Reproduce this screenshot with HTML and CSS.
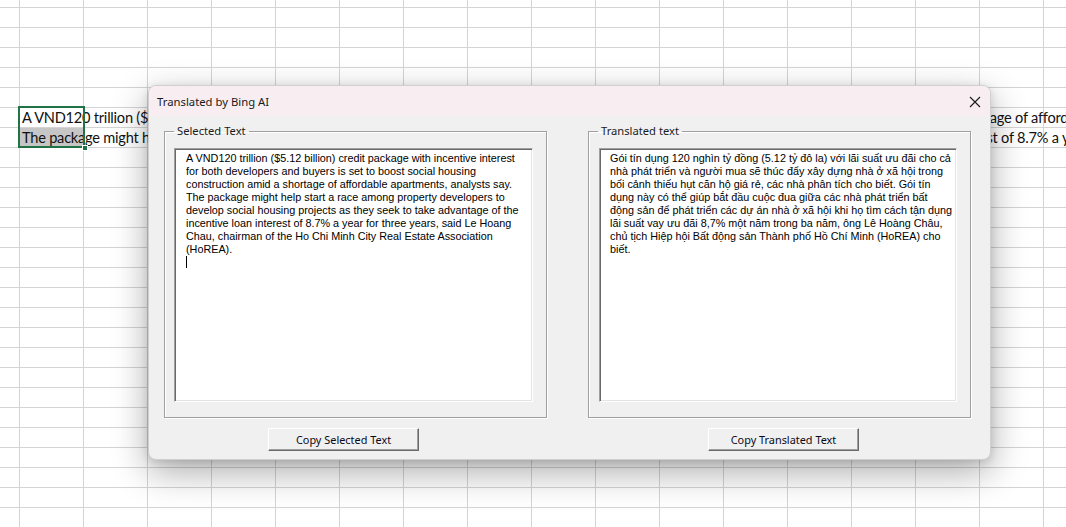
FILE: index.html
```html
<!DOCTYPE html>
<html lang="en">
<head>
<meta charset="utf-8">
<title>Translated by Bing AI</title>
<link rel="stylesheet" href="styles.css">
</head>
<body>
<div class="sheet">
  <div class="cells">
    <div class="row">A VND120 trillion ($5.12 billion) credit package with incentive interest for both developers and buyers is set to boost social housing construction amid a shortage of affordable apartments, analysts say.</div>
    <div class="row row-range">The package might help start a race among property developers to develop social housing projects as they seek to take advantage of the incentive loan interest of 8.7% a year for three years, said Le Hoang Chau, chairman of the Ho Chi Minh City Real Estate Association (HoREA).</div>
    <div class="active-cell"><span class="fill-handle"></span></div>
  </div>
</div>

<div class="dialog">
  <div class="titlebar">
    <span class="title">Translated by Bing AI</span>
    <svg class="close" width="12" height="12" viewBox="0 0 12 12" aria-hidden="true"><path d="M1 1 L11 11 M11 1 L1 11" stroke="#1a1a1a" stroke-width="1.1" fill="none"/></svg>
  </div>
  <div class="dialog-body">
    <div class="col">
      <fieldset class="group">
        <legend>Selected Text</legend>
        <div class="textbox">A VND120 trillion ($5.12 billion) credit package with incentive interest<br>for both developers and buyers is set to boost social housing<br>construction amid a shortage of affordable apartments, analysts say.<br>The package might help start a race among property developers to<br>develop social housing projects as they seek to take advantage of the<br>incentive loan interest of 8.7% a year for three years, said Le Hoang<br>Chau, chairman of the Ho Chi Minh City Real Estate Association<br>(HoREA).<br><span class="caret"></span></div>
      </fieldset>
      <button class="btn btn-left">Copy Selected Text</button>
    </div>
    <div class="col">
      <fieldset class="group">
        <legend>Translated text</legend>
        <div class="textbox textbox-right">Gói tín dụng 120 nghìn tỷ đồng (5.12 tỷ đô la) với lãi suất ưu đãi cho cả<br>nhà phát triển và người mua sẽ thúc đẩy xây dựng nhà ở xã hội trong<br>bối cảnh thiếu hụt căn hộ giá rẻ, các nhà phân tích cho biết. Gói tín<br>dụng này có thể giúp bắt đầu cuộc đua giữa các nhà phát triển bất<br>động sản để phát triển các dự án nhà ở xã hội khi họ tìm cách tận dụng<br>lãi suất vay ưu đãi 8,7% một năm trong ba năm, ông Lê Hoàng Châu,<br>chủ tịch Hiệp hội Bất động sản Thành phố Hồ Chí Minh (HoREA) cho<br>biết.</div>
      </fieldset>
      <button class="btn btn-right">Copy Translated Text</button>
    </div>
  </div>
</div>
</body>
</html>
```

FILE: styles.css
```css
* { box-sizing: border-box; }
html, body { margin: 0; padding: 0; }
body {
  width: 1066px;
  height: 527px;
  overflow: hidden;
  background: #fff;
  position: relative;
}

/* spreadsheet */
.sheet {
  width: 1066px;
  height: 527px;
  overflow: hidden;
  background-color: #fff;
  background-image:
    linear-gradient(to right, #d4d4d4 1px, transparent 1px),
    linear-gradient(to bottom, #d4d4d4 1px, transparent 1px);
  background-size: 64px 20px;
  background-position: 19px 7px;
}
.cells {
  position: relative;
  padding-top: 108px;
  padding-left: 19px;
  font-family: Lato, "Open Sans", sans-serif;
  font-size: 14.6px;
  letter-spacing: -0.23px;
  color: #111;
}
.row {
  height: 20px;
  line-height: 19px;
  padding-left: 3px;
  white-space: nowrap;
}
.row-range {
  background: linear-gradient(#c6c6c6, #c6c6c6) no-repeat 1px 0 / 63px 19px;
}
.active-cell {
  position: absolute;
  left: 18px;
  top: 106px;
  width: 67px;
  height: 42px;
  border: 2px solid #217346;
}
.fill-handle {
  position: absolute;
  right: -5px;
  bottom: -5px;
  width: 6px;
  height: 6px;
  background: #217346;
  border: 1px solid #fff;
}

/* dialog window */
.dialog {
  position: absolute;
  left: 148px;
  top: 85px;
  width: 843px;
  height: 375px;
  background: #f0f0f0;
  border: 1px solid #cfcfcf;
  border-radius: 8px;
  overflow: hidden;
  box-shadow: 0 12px 36px rgba(0, 0, 0, 0.33), 0 2px 8px rgba(0, 0, 0, 0.12);
  font-family: "Noto Sans", "Open Sans", sans-serif;
}
.titlebar {
  height: 30px;
  background: #f8eef1;
  display: flex;
  align-items: center;
  justify-content: space-between;
  padding: 0 9px 0 8px;
}
.title {
  font-size: 11.3px;
  color: #1a1a1a;
}
.close { margin-top: 1px; }

.dialog-body {
  display: grid;
  grid-template-columns: 383px 383px;
  column-gap: 41px;
  padding: 8px 0 0 15px;
}
.col {
  display: flex;
  flex-direction: column;
  align-items: flex-start;
}
.group {
  margin: 0;
  width: 383px;
  height: 294px;
  padding: 10px 0 0 9px;
  border: 1px solid #a0a0a0;
  box-shadow: inset 1px 1px 0 #fff, 1px 1px 0 #fff;
}
.group legend {
  margin-left: 0;
  padding: 0 3px;
  font-size: 11.2px;
  line-height: 14px;
  color: #1a1a1a;
}
.textbox {
  width: 359px;
  height: 254px;
  background: #fff;
  border: 1px solid;
  border-color: #a0a0a0 #fff #fff #a0a0a0;
  box-shadow: inset 1px 1px 0 #696969, inset -1px -1px 0 #e3e3e3;
  padding: 3px 6px 0 11px;
  font-family: Tahoma, "Liberation Sans", Arial, sans-serif;
  font-size: 10.8px;
  line-height: 13px;
  color: #000;
  white-space: nowrap;
}
.textbox-right { width: 358px; margin-left: 1px; padding-left: 10px; }
.caret {
  display: inline-block;
  width: 1px;
  height: 12px;
  background: #000;
  vertical-align: -2px;
}

.btn {
  margin-top: 10px;
  width: 151px;
  height: 23px;
  padding: 0;
  background: #f0f0f0;
  border: 1px solid;
  border-color: #fff #696969 #696969 #fff;
  box-shadow: inset -1px -1px 0 #a0a0a0;
  font-family: "Noto Sans", "Open Sans", sans-serif;
  font-size: 10.9px;
  color: #0a0a1a;
}
.btn-left { margin-left: 104px; }
.btn-right { margin-left: 120px; }
```
